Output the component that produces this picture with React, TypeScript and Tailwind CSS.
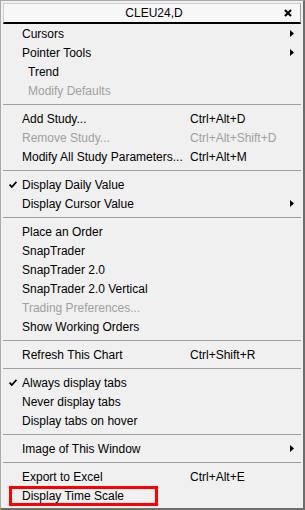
import React from "react";

type Item =
  | { sep: true }
  | {
      sep?: false;
      label: string;
      shortcut?: string;
      sub?: boolean;
      checked?: boolean;
      disabled?: boolean;
      indent?: boolean;
      marked?: boolean;
    };

const items: Item[] = [
  { label: "Cursors", sub: true },
  { label: "Pointer Tools", sub: true },
  { label: "Trend", indent: true },
  { label: "Modify Defaults", indent: true, disabled: true },
  { sep: true },
  { label: "Add Study...", shortcut: "Ctrl+Alt+D" },
  { label: "Remove Study...", shortcut: "Ctrl+Alt+Shift+D", disabled: true },
  { label: "Modify All Study Parameters...", shortcut: "Ctrl+Alt+M" },
  { sep: true },
  { label: "Display Daily Value", checked: true },
  { label: "Display Cursor Value", sub: true },
  { sep: true },
  { label: "Place an Order" },
  { label: "SnapTrader" },
  { label: "SnapTrader 2.0" },
  { label: "SnapTrader 2.0 Vertical" },
  { label: "Trading Preferences...", disabled: true },
  { label: "Show Working Orders" },
  { sep: true },
  { label: "Refresh This Chart", shortcut: "Ctrl+Shift+R" },
  { sep: true },
  { label: "Always display tabs", checked: true },
  { label: "Never display tabs" },
  { label: "Display tabs on hover" },
  { sep: true },
  { label: "Image of This Window", sub: true },
  { sep: true },
  { label: "Export to Excel", shortcut: "Ctrl+Alt+E" },
  { label: "Display Time Scale", marked: true },
];

function Check() {
  return (
    <svg width="8" height="7" viewBox="0 0 8 7">
      <path d="M0.5 3.5 L2.8 6 L7.5 0.8" fill="none" stroke="#000" strokeWidth="1.8" />
    </svg>
  );
}

function Arrow() {
  return (
    <svg width="4" height="7" viewBox="0 0 4 7">
      <polygon points="0,0 4,3.5 0,7" fill="#000" />
    </svg>
  );
}

export default function App() {
  return (
    <div
      className="w-[305px] h-[510px] bg-[#f0f0f0] border-l border-t border-[#a9a9a9] border-r-2 border-b-2 border-r-[#6d6d6d] border-b-[#6d6d6d] overflow-hidden text-[12px] text-black"
      style={{ fontFamily: '"Liberation Sans", Arial, sans-serif' }}
    >
      {/* Title */}
      <div className="mx-[2px] mt-[2px] h-[21px] border-l border-t border-r border-[#cfcfcf] border-r-[#a0a0a0] border-b-2 border-b-[#000] bg-[#f7f7f7] flex items-center relative">
        <span className="flex-1 text-center pl-[4px]">CLEU24,D</span>
        <svg className="absolute right-[8px] top-[5px]" width="8" height="8" viewBox="0 0 8 8">
          <path d="M1 1 L7 7 M7 1 L1 7" stroke="#000" strokeWidth="2.2" />
        </svg>
      </div>

      {items.map((it, i) =>
        it.sep ? (
          <div key={i} className="h-[9px] flex items-center px-[2px]">
            <div className="h-px w-full bg-[#a0a0a0]" />
          </div>
        ) : (
          <div key={i} className="h-[19px] flex items-center relative">
            <span className="w-[21px] flex justify-center pl-[2px]">{it.checked && <Check />}</span>
            <span
              className={
                "w-[168px] whitespace-nowrap " +
                (it.indent ? "pl-[6px] " : "") +
                (it.disabled ? "text-[#a0a0a0]" : "")
              }
            >
              {it.label}
            </span>
            {it.shortcut && (
              <span className={"whitespace-nowrap " + (it.disabled ? "text-[#a0a0a0]" : "")}>
                {it.shortcut}
              </span>
            )}
            {it.sub && (
              <span className="ml-auto pr-[9px] flex items-center">
                <Arrow />
              </span>
            )}
            {it.marked && (
              <div className="absolute left-[8px] top-[0px] w-[149px] h-[20px] border-[3px] border-[#ff0000]" />
            )}
          </div>
        )
      )}
    </div>
  );
}
